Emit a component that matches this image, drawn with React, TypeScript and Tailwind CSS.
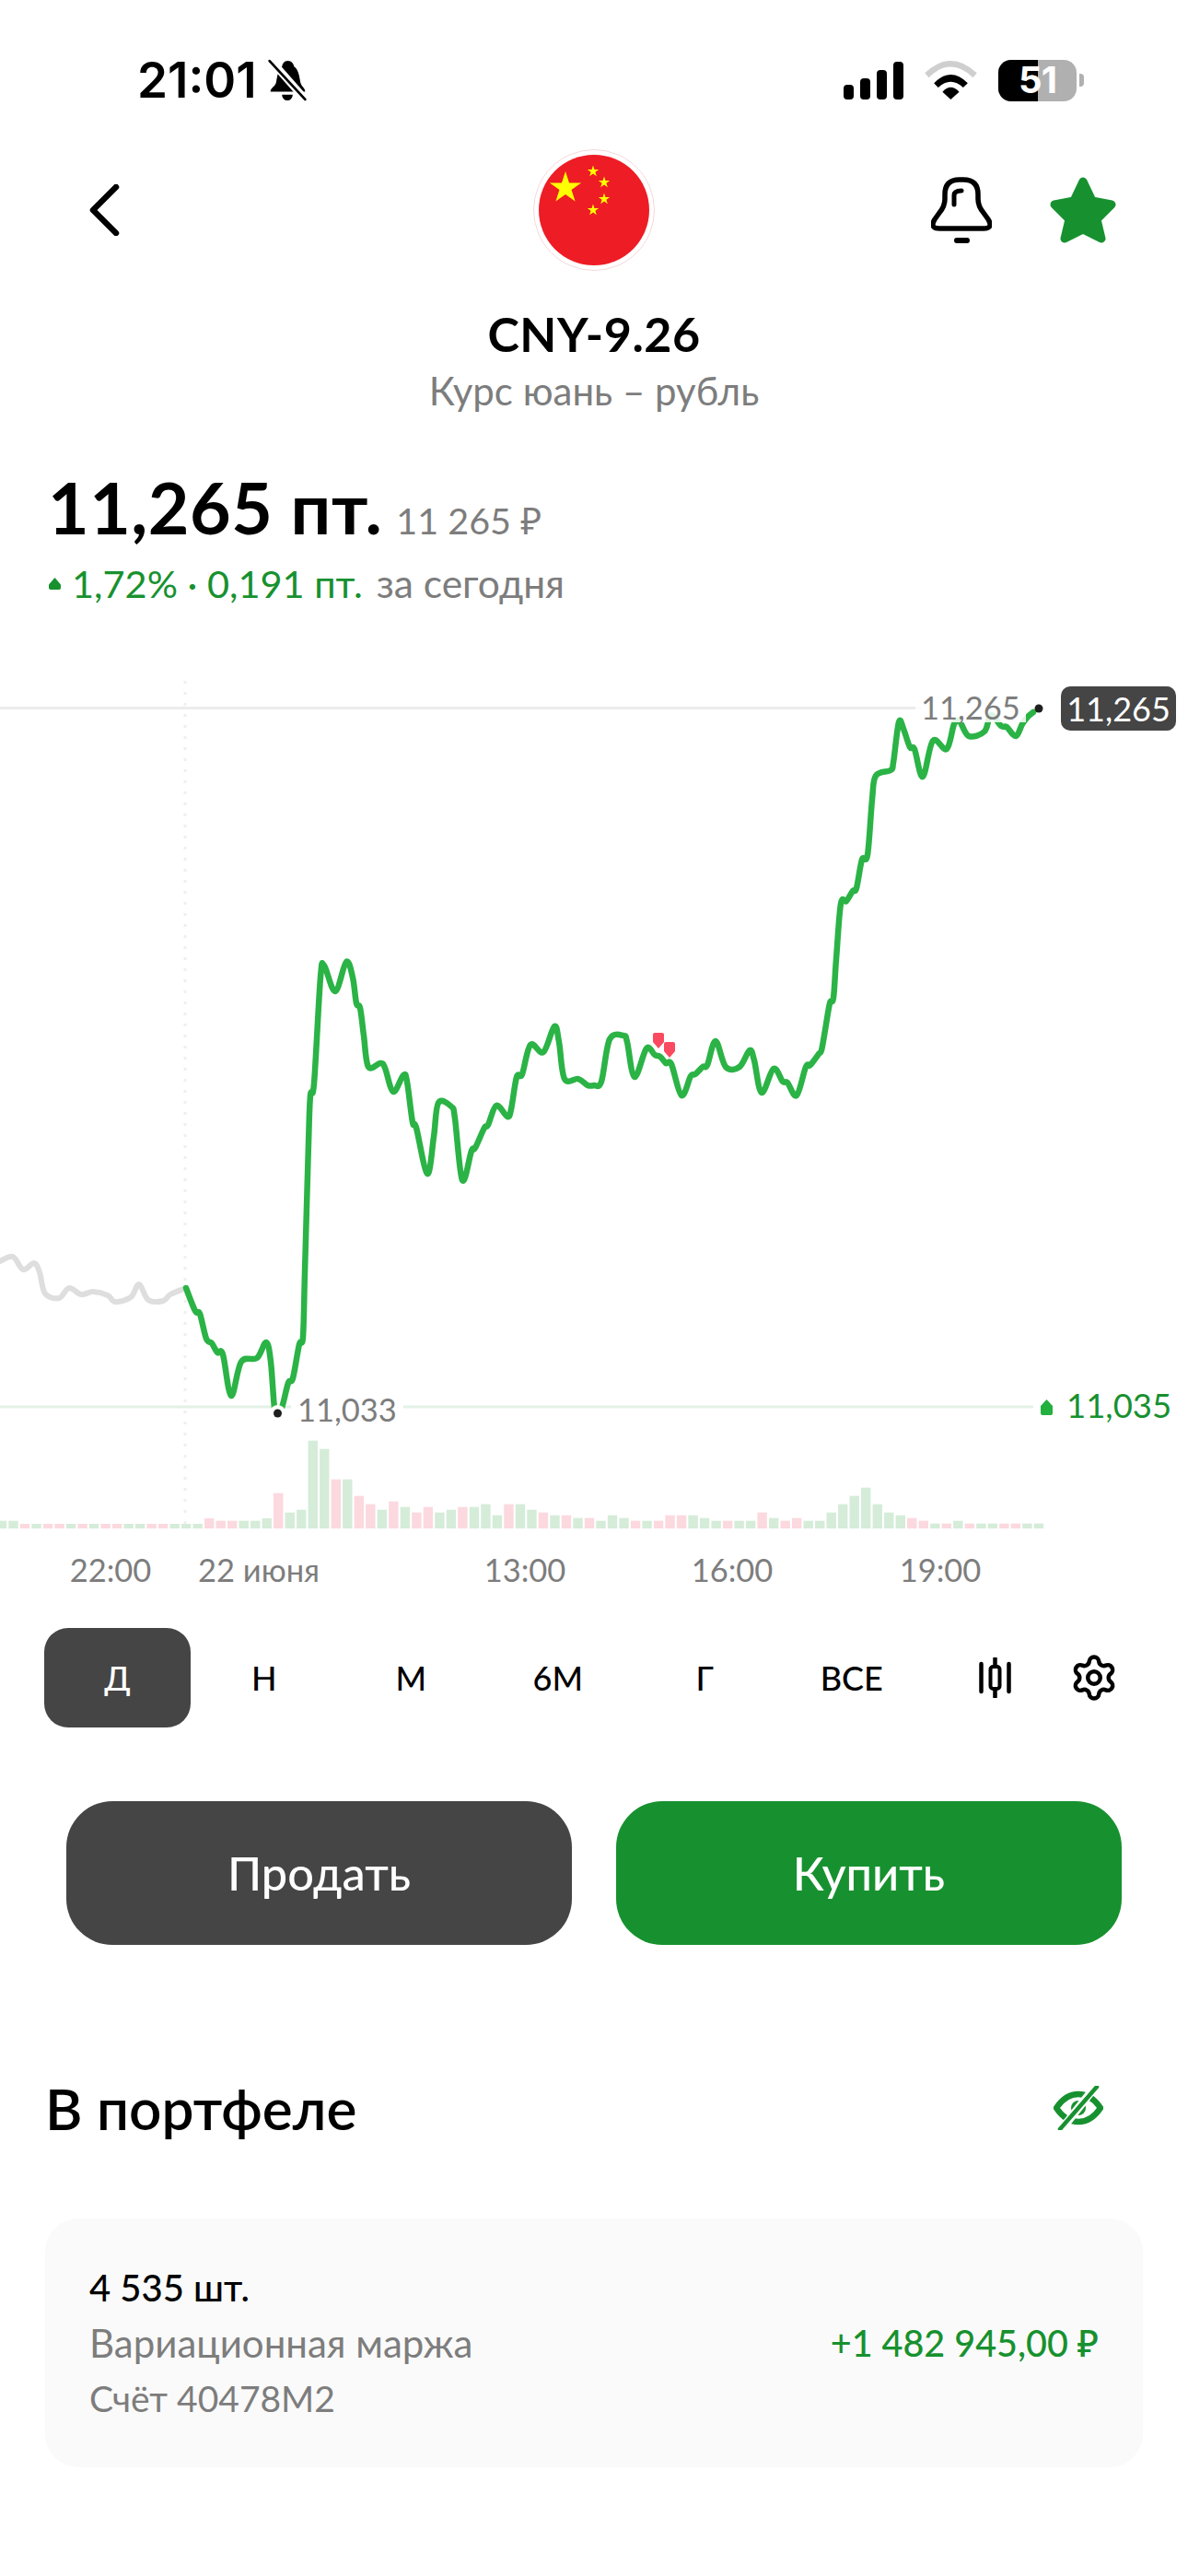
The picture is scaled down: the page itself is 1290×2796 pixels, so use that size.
import React from "react";
import { Settings } from "lucide-react";

const greenLine: [number, number][] = [
  [202,1397],[212,1422],[217,1425],[224,1452],[230,1457],[236,1467],[242,1469],[251,1514],[262,1477],[279,1473],[289,1456],[294,1477],[298,1527],[301,1530],[306,1527],[313,1500],[318,1495],[325,1458],[329,1450],[331,1380],[335,1240],[337,1188],[341,1175],[348,1060],[352,1047],[364,1075],[376,1043],[383,1060],[387,1088],[391,1093],[395,1123],[400,1157],[413,1153],[418,1158],[427,1184],[438,1166],[442,1173],[448,1217],[452,1223],[464,1273],[471,1233],[476,1196],[490,1200],[494,1213],[502,1280],[512,1248],[516,1245],[526,1223],[530,1220],[539,1199],[551,1211],[555,1203],[561,1168],[567,1165],[576,1133],[590,1141],[602,1113],[607,1130],[613,1170],[628,1170],[638,1177],[645,1177],[653,1173],[662,1127],[677,1123],[681,1130],[689,1168],[702,1137],[711,1144],[717,1146],[723,1153],[729,1154],[740,1188],[750,1167],[755,1165],[763,1157],[768,1155],[777,1129],[788,1157],[803,1157],[814,1139],[819,1150],[827,1185],[840,1159],[850,1173],[855,1174],[865,1188],[875,1157],[880,1155],[889,1143],[892,1139],[896,1117],[901,1088],[905,1082],[908,1040],[913,980],[919,977],[926,966],[930,963],[936,932],[942,927],[947,867],[951,841],[967,835],[970,827],[976,783],[981,790],[988,810],[993,812],[1002,842],[1013,803],[1028,812],[1036,785],[1042,782],[1052,798],[1069,793],[1076,775],[1087,787],[1093,788],[1103,798],[1110,785],[1116,777],[1122,772],
];
const grayLine: [number, number][] = [
  [0,1368],[14,1363],[25,1377],[37,1370],[43,1380],[49,1403],[64,1408],[75,1397],[88,1404],[101,1401],[117,1405],[125,1412],[142,1407],[151,1393],[161,1410],[177,1411],[185,1404],[202,1397],
];

function smooth(pts: [number, number][]) {
  let d = `M${pts[0][0]} ${pts[0][1]}`;
  const k = 0.17;
  for (let i = 0; i < pts.length - 1; i++) {
    const p0 = pts[Math.max(0, i - 1)];
    const p1 = pts[i];
    const p2 = pts[i + 1];
    const p3 = pts[Math.min(pts.length - 1, i + 2)];
    d += ` C${(p1[0] + (p2[0] - p0[0]) * k).toFixed(1)} ${(p1[1] + (p2[1] - p0[1]) * k).toFixed(1)} ${(p2[0] - (p3[0] - p1[0]) * k).toFixed(1)} ${(p2[1] - (p3[1] - p1[1]) * k).toFixed(1)} ${p2[0]} ${p2[1]}`;
  }
  return d;
}

// top of each bar in zoom units, g = green, p = pink
const bars: [number, string][] = [
  [810,"g"],[810,"g"],[820,"p"],[820,"g"],[820,"p"],[820,"p"],[820,"g"],[820,"p"],[820,"g"],[820,"p"],[820,"p"],[820,"g"],[820,"g"],[820,"p"],[820,"p"],[820,"g"],[820,"g"],[820,"g"],[802,"p"],[810,"p"],[810,"p"],[810,"g"],[810,"g"],[802,"g"],[720,"p"],[783,"g"],[774,"g"],[549,"g"],[576,"g"],[675,"p"],[675,"g"],[729,"p"],[756,"p"],[774,"g"],[747,"p"],[765,"g"],[783,"p"],[765,"p"],[783,"g"],[774,"g"],[765,"p"],[765,"g"],[756,"g"],[792,"g"],[756,"p"],[756,"g"],[774,"g"],[783,"p"],[792,"g"],[792,"p"],[801,"g"],[801,"p"],
  [810,"g"],[792,"g"],[801,"g"],[810,"p"],[810,"g"],[810,"p"],[792,"p"],[792,"p"],[792,"g"],[801,"g"],[810,"g"],[810,"p"],[810,"g"],[810,"g"],[783,"p"],[801,"g"],[810,"p"],[801,"p"],[810,"g"],[810,"g"],[783,"g"],[756,"g"],[729,"g"],[702,"g"],[756,"g"],[783,"g"],[792,"g"],[801,"p"],[810,"p"],[819,"g"],[819,"p"],[810,"g"],[819,"p"],[819,"g"],[819,"g"],[819,"p"],[819,"p"],[819,"g"],[819,"g"],
];

function StatusBar() {
  return (
    <div className="flex h-[168px] items-center pl-[149px] pr-[113px] pt-[6px]">
      <span className="font-['Inter'] text-[53px] font-semibold leading-none tracking-[0px] text-black">21:01</span>
      <svg width="44" height="46" viewBox="0 0 41 44" className="ml-[11px]">
        <path d="M21 2C25 2 27 5 27.5 8C32 11 33 18 34 24C35 29 39 30 39 34H3C3 30 8 29 9 24C10 18 11 11 15 8C15.5 5 17 2 21 2Z" fill="#000" />
        <path d="M15 37H26C26 41 23 43 20.5 43C18 43 15 41 15 37Z" fill="#000" />
        <path d="M2 0L40 43" stroke="#fff" strokeWidth="8" />
        <path d="M2 2L39 42" stroke="#000" strokeWidth="2.6" strokeLinecap="round" />
      </svg>
      <div className="ml-auto flex items-center">
        <svg width="65" height="41" viewBox="0 0 65 41">
          <rect x="0" y="25" width="11" height="16" rx="4" fill="#000" />
          <rect x="18" y="18" width="11" height="23" rx="4" fill="#000" />
          <rect x="36" y="9" width="11" height="32" rx="4" fill="#000" />
          <rect x="54" y="0" width="11" height="41" rx="4" fill="#000" />
        </svg>
        <svg width="57" height="42" viewBox="432 105 171 127" className="ml-[23px]">
          <path d="M432 145Q517 65 603 145L590 160Q517 90 445 160Z" fill="#cfcfcf" />
          <path d="M462 178Q517 122 573 178L558 193Q517 155 476 193Z" fill="#000" />
          <path d="M490 207Q517 177 545 207L517 232Z" fill="#000" />
        </svg>
        <div className="relative ml-[23px] flex h-[45px] w-[85px] items-center justify-center rounded-[14px] bg-[#b0b0b0]">
          <div className="absolute inset-y-0 left-0 w-[43px] rounded-l-[14px] bg-black" />
          <span className="relative font-['Inter'] text-[40px] font-bold leading-none tracking-[-1px] text-white">51</span>
        </div>
        <div className="ml-[3px] h-[14px] w-[5px] rounded-r-[4px] bg-[#b0b0b0]" />
      </div>
    </div>
  );
}

function Star({ cx, cy, r }: { cx: number; cy: number; r: number }) {
  const pts: string[] = [];
  for (let i = 0; i < 10; i++) {
    const a = -Math.PI / 2 + (i * Math.PI) / 5;
    const rr = i % 2 === 0 ? r : r * 0.382;
    pts.push(`${(cx + rr * Math.cos(a)).toFixed(2)},${(cy + rr * Math.sin(a)).toFixed(2)}`);
  }
  return <polygon points={pts.join(" ")} fill="#ffff00" />;
}

function Header() {
  return (
    <div className="grid h-[120px] grid-cols-[1fr_132px_1fr] grid-rows-[120px] items-center">
      <div className="pl-[97px]">
        <svg width="33" height="56" viewBox="0 0 33 56" className="block">
          <path d="M29 3L4 28L29 53" fill="none" stroke="#000" strokeWidth="6.5" strokeLinecap="round" strokeLinejoin="round" />
        </svg>
      </div>
      <div className="flex h-[132px] w-[132px] items-center justify-center rounded-full border border-[#f6d8db] bg-white">
        <svg width="120" height="120" viewBox="585 168 120 120" className="block">
          <circle cx="645" cy="228" r="60" fill="#ee1c25" />
          <Star cx={614} cy={204} r={18} />
          <Star cx={644} cy={186} r={6.5} />
          <Star cx={656} cy={198} r={6.5} />
          <Star cx={656} cy={216} r={6.5} />
          <Star cx={644} cy={228} r={6.5} />
        </svg>
      </div>
      <div className="flex items-center justify-end gap-[63px] pr-[78px]">
        <svg width="66" height="72" viewBox="1011 194 66 72" className="block">
          <path d="M1020 250H1068Q1079 250 1073 240L1068 233Q1062 226 1062 218V213Q1062 197 1046 197H1042Q1026 197 1026 213V218Q1026 226 1020 233L1015 240Q1009 250 1020 250Z" fill="none" stroke="#000" strokeWidth="5.5" strokeLinejoin="round" />
          <path d="M1036 224V214Q1036 209 1044 209" fill="none" stroke="#000" strokeWidth="5" strokeLinecap="round" />
          <rect x="1036" y="260" width="17" height="6" rx="3" fill="#000" />
        </svg>
        <svg width="72" height="72" viewBox="1140 191 72 72" className="block">
          <polygon points="1176,196 1186,217 1207,221 1191,237 1196,258 1176,248 1156,258 1161,237 1145,221 1166,217" fill="#17912f" stroke="#17912f" strokeWidth="9" strokeLinejoin="round" />
        </svg>
      </div>
    </div>
  );
}

function Chart() {
  return (
    <div className="relative h-[950px] w-full">
      <svg width="1290" height="950" viewBox="0 720 1290 950" className="block">
        <line x1="0" y1="767.5" x2="1000" y2="767.5" stroke="#ececec" strokeWidth="3" />
        <line x1="0" y1="1526" x2="1122" y2="1526" stroke="#e3f1e6" strokeWidth="3" />
        <line x1="201" y1="738" x2="201" y2="1660" stroke="#efefef" strokeWidth="3" strokeDasharray="3 9" />
        {bars.map(([top, c], i) => {
          const h = (835 - top) / 3;
          return (
            <rect key={i} x={2 + 12.51 * i - 5.2} y={1658 - h} width={10.4} height={h} fill={c === "g" ? "#d5ecd9" : "#fbd9df"} />
          );
        })}
        <path d={smooth(grayLine)} fill="none" stroke="#dedede" strokeWidth="6" strokeLinejoin="round" strokeLinecap="round" />
        <path d={smooth(greenLine)} fill="none" stroke="#2bb346" strokeWidth="6.5" strokeLinejoin="round" strokeLinecap="round" />
        <path d="M711 1120H719Q721 1120 721 1122V1130L715 1137L709 1130V1122Q709 1120 711 1120Z" fill="#fa4a5f" />
        <path d="M723 1130H731Q733 1130 733 1132V1140L727 1147L721 1140V1132Q721 1130 723 1130Z" fill="#fa4a5f" />
        <circle cx="301.5" cy="1533" r="9" fill="#fff" />
        <circle cx="301.5" cy="1533" r="4.5" fill="#1f1f1f" />
        <circle cx="1128" cy="768" r="4.5" fill="#1f1f1f" />
        <path d="M1136.5 1518L1143 1525V1533Q1143 1535 1141 1535H1132Q1130 1535 1130 1533V1525Z" fill="#22b03f" />
      </svg>
      <div className="absolute left-[994px] top-[31px] bg-white/85 px-[6px] font-['Lato'] text-[34.5px] leading-[32px] text-[#7d7d7d]">11,265</div>
      <div className="absolute left-[1152px] top-[24px] flex h-[48px] w-[125px] items-center justify-center rounded-[10px] bg-[#454545] font-['Lato'] text-[36px] leading-none text-white">11,265</div>
      <div className="absolute left-[316px] top-[793px] bg-white px-[7px] font-['Lato'] text-[34.5px] leading-[32px] text-[#7d7d7d]">11,033</div>
      <div className="absolute left-[1158px] top-[786px] font-['Lato'] text-[36.5px] leading-[36px] text-[#17912f]">11,035</div>
    </div>
  );
}

function Period({ label, active }: { label: string; active?: boolean }) {
  return (
    <div className={active ? "flex h-[108px] w-[159px] items-center justify-center rounded-[26px] bg-[#454545] text-[36px] font-medium text-white" : "flex h-[108px] w-[159.5px] items-center justify-center text-[36px] font-medium text-black"}>
      {label}
    </div>
  );
}

export default function App() {
  return (
    <div className="h-[2796px] w-[1290px] overflow-hidden bg-white font-['Lato','Noto_Sans',sans-serif]">
      <StatusBar />
      <Header />
      <div className="mt-[46px] text-center text-[52px] font-bold leading-[56px] tracking-[0.5px] text-black">CNY-9.26</div>
      <div className="mt-[11px] text-center text-[42px] leading-[46px] text-[#7d7d7d]">Курс юань – рубль</div>
      <div className="mt-[63px] flex items-baseline pl-[52px]">
        <span className="text-[77px] font-bold leading-[80px] tracking-[0.5px] text-black">11,265 пт.</span>
        <span className="ml-[15px] text-[39.5px] leading-[80px] text-[#7d7d7d]">11 265 ₽</span>
      </div>
      <div className="mt-[4px] flex items-center pl-[53px] text-[41.5px] leading-[48px]">
        <svg width="13" height="13" viewBox="0 0 13 13">
          <path d="M6.5 0L13 7.5V11Q13 13 11 13H2Q0 13 0 11V7.5Z" fill="#17912f" />
        </svg>
        <span className="ml-[12px] text-[#17912f]">1,72% · 0,191 пт.</span>
        <span className="ml-[15px] text-[42.5px] text-[#7d7d7d]">за сегодня</span>
      </div>
      <div className="mt-[64px]">
        <Chart />
      </div>
      <div className="flex h-[66px] items-center pl-[60px] text-[34.5px] text-[#7d7d7d]">
        <span className="w-[120px] text-center">22:00</span>
        <span className="ml-[20px] w-[162px] text-center">22 июня</span>
        <span className="ml-[128px] w-[160px] text-center">13:00</span>
        <span className="ml-[65px] w-[160px] text-center">16:00</span>
        <span className="ml-[66px] w-[160px] text-center">19:00</span>
      </div>
      <div className="mt-[30px] flex h-[108px] items-center pl-[48px]">
        <Period label="Д" active />
        <Period label="Н" />
        <Period label="М" />
        <Period label="6М" />
        <Period label="Г" />
        <Period label="ВСЕ" />
        <svg width="35" height="44" viewBox="0 0 35 44" className="ml-[58px]">
          <path d="M2.5 7V37M32.5 7V37M17.5 1V43" fill="none" stroke="#000" strokeWidth="4.5" strokeLinecap="round" />
          <rect x="12.5" y="10" width="10" height="24" rx="3" fill="#fff" stroke="#000" strokeWidth="4" />
        </svg>
        <Settings size={54} strokeWidth={2} color="#000" className="ml-[63px]" />
      </div>
      <div className="mt-[80px] flex gap-[48px] pl-[72px]">
        <div className="flex h-[156px] w-[549px] items-center justify-center rounded-[50px] bg-[#454545] text-[50.5px] font-medium text-white">Продать</div>
        <div className="flex h-[156px] w-[549px] items-center justify-center rounded-[50px] bg-[#17912f] text-[50.5px] font-medium text-white">Купить</div>
      </div>
      <div className="mt-[147px] flex h-[60px] items-center justify-between pl-[49px] pr-[92px]">
        <span className="text-[62px] font-semibold leading-[60px] text-black">В портфеле</span>
        <svg width="54" height="48" viewBox="0 0 54 48">
          <path d="M3 24Q13 9 27 9Q41 9 51 24Q41 39 27 39Q13 39 3 24Z" fill="none" stroke="#17912f" strokeWidth="6.5" strokeLinejoin="round" />
          <circle cx="27" cy="24" r="8" fill="#17912f" />
          <path d="M46 0L8 48" stroke="#fff" strokeWidth="9" />
          <path d="M47 1L7 47" stroke="#17912f" strokeWidth="4.5" strokeLinecap="round" />
        </svg>
      </div>
      <div className="mx-[49px] mt-[90px] flex h-[270px] w-[1192px] items-center justify-between rounded-[36px] bg-[#fafafa] pl-[48px] pr-[48px]">
        <div className="flex flex-col gap-[16px]">
          <span className="text-[40px] font-medium leading-[44px] text-black">4 535 шт.</span>
          <span className="text-[42px] leading-[44px] text-[#7d7d7d]">Вариационная маржа</span>
          <span className="text-[39px] leading-[44px] text-[#7d7d7d]">Счёт 40478М2</span>
        </div>
        <span className="text-[39.5px] font-medium leading-[44px] text-[#17912f]">+1 482 945,00 ₽</span>
      </div>
    </div>
  );
}
